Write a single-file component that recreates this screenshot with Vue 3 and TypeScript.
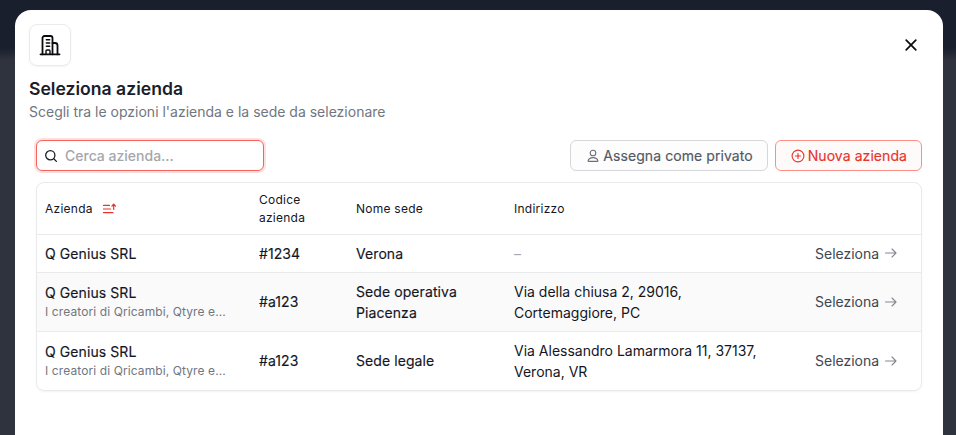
<script setup lang="ts">
interface Row { name: string; desc?: string; code: string; site: string; addr: string; muted?: boolean }
const rows: Row[] = [
  { name: 'Q Genius SRL', code: '#1234', site: 'Verona', addr: '–', muted: true },
  { name: 'Q Genius SRL', desc: 'I creatori di Qricambi, Qtyre e...', code: '#a123', site: 'Sede operativa Piacenza', addr: 'Via della chiusa 2, 29016, Cortemaggiore, PC' },
  { name: 'Q Genius SRL', desc: 'I creatori di Qricambi, Qtyre e...', code: '#a123', site: 'Sede legale', addr: 'Via Alessandro Lamarmora 11, 37137, Verona, VR' },
]
</script>

<template>
  <div class="backdrop">
    <section class="modal">
      <header class="head">
        <div class="logo">
          <svg width="24" height="24" viewBox="0 0 24 24" fill="none" stroke="#0b0b0f" stroke-width="1.800" stroke-linecap="round" stroke-linejoin="round">
            <path d="M2.500 21.300h19" />
            <path d="M4.500 21.300V5a2 2 0 0 1 2-2h6a2 2 0 0 1 2 2v16.300" />
            <path d="M14.500 10h2.500a2.500 2.500 0 0 1 2.500 2.500v8.800" />
            <path d="M8 21.300v-3.300a1 1 0 0 1 1-1h2a1 1 0 0 1 1 1v3.300" stroke-width="1.400" />
            <path d="M8.300 10h3.400M8.300 13.300h3.400M8.300 6.800h3.400" stroke-width="1.400" />
          </svg>
        </div>
        <button class="close" aria-label="Chiudi">
          <svg width="12" height="12" viewBox="0 0 12 12" fill="none" stroke="#0b0b0f" stroke-width="1.700" stroke-linecap="round"><path d="M1.200 1.200l9.600 9.600M10.800 1.200l-9.600 9.600" /></svg>
        </button>
      </header>
      <h1 class="title">Seleziona azienda</h1>
      <p class="sub">Scegli tra le opzioni l'azienda e la sede da selezionare</p>

      <div class="tools">
        <label class="search">
          <svg width="14" height="14" viewBox="0 0 14 14" fill="none" stroke="#1a1d26" stroke-width="1.300" stroke-linecap="round"><circle cx="6.300" cy="6.300" r="4.600" /><path d="M9.800 9.800l2.600 2.600" /></svg>
          <input class="input" placeholder="Cerca azienda..." />
        </label>
        <div class="actions">
          <button class="btn plain">
            <svg width="14" height="14" viewBox="0 0 14 14" fill="none" stroke="#6c7079" stroke-width="1.100" stroke-linecap="round" stroke-linejoin="round"><circle cx="7" cy="4" r="2.800" /><path d="M2.500 12.400h9c.3 0 .5-.3.4-.6-.5-2-2.200-3.200-4.900-3.200s-4.400 1.200-4.900 3.200c-.1.300.1.600.4.600z" /></svg>
            Assegna come privato
          </button>
          <button class="btn danger">
            <svg width="14" height="14" viewBox="0 0 14 14" fill="none" stroke="#e5352d" stroke-width="1.100" stroke-linecap="round"><circle cx="7" cy="7" r="5.900" /><path d="M7 4.600v4.800M4.600 7h4.800" /></svg>
            Nuova azienda
          </button>
        </div>
      </div>

      <div class="card">
        <table class="table">
          <colgroup>
            <col class="c1" /><col class="c2" /><col class="c3" /><col class="c4" /><col />
          </colgroup>
          <thead>
            <tr>
              <th>
                <span class="sort">Azienda
                  <svg width="14" height="12" viewBox="0 0 14 12" fill="none" stroke="#e5352d" stroke-width="1.200" stroke-linecap="round" stroke-linejoin="round"><path d="M.5 2.400h6M.5 6h7M.5 9.700h9.500" /><path d="M10.700 6.500V1.200M9 3l1.700-1.800L12.400 3" /></svg>
                </span>
              </th>
              <th>Codice azienda</th>
              <th>Nome sede</th>
              <th>Indirizzo</th>
              <th></th>
            </tr>
          </thead>
          <tbody>
            <tr v-for="(r, i) in rows" :key="i" :class="{ alt: i === 1 }">
              <td>
                <div class="name">{{ r.name }}</div>
                <div v-if="r.desc" class="desc">{{ r.desc }}</div>
              </td>
              <td class="strong">{{ r.code }}</td>
              <td class="strong">{{ r.site }}</td>
              <td class="addr" :class="{ muted: r.muted }">{{ r.addr }}</td>
              <td class="pick">
                <span class="pick-in">Seleziona
                  <svg width="14" height="12" viewBox="0 0 14 12" fill="none" stroke="#85888f" stroke-width="1.100" stroke-linecap="round" stroke-linejoin="round"><path d="M1.500 6h10.500M8 2l4 4-4 4" /></svg>
                </span>
              </td>
            </tr>
          </tbody>
        </table>
      </div>
    </section>
  </div>
</template>

<style>
html, body { margin: 0; padding: 0; background: #2f333d; overflow: hidden; }
</style>

<style scoped>
* { box-sizing: border-box; }
.backdrop {
  height: 435px;
  padding: 10px 13px 0 15px;
  overflow: hidden;
  background: linear-gradient(#1a1f2e 0, #1a1f2e 48px, #2f333d 60px, #2f333d 100%);
  font-family: Inter, "Liberation Sans", sans-serif;
  color: #14161f;
}
.modal {
  height: 460px;
  background: #fff;
  border-radius: 16px;
  padding: 14px 21px 0 14px;
}
.head { display: flex; justify-content: space-between; align-items: center; }
.logo {
  width: 42px; height: 42px;
  display: flex; align-items: center; justify-content: center;
  border: 1px solid #e9eaeb; border-radius: 8px;
  box-shadow: 0 1px 2px rgba(16, 24, 40, .05);
}
.close {
  width: 24px; height: 24px; margin-right: -1px; padding: 0;
  display: flex; align-items: center; justify-content: center;
  background: none; border: 0;
}
.title { margin: 12px 0 0; font-size: 17.6px; line-height: 22px; font-weight: 600; color: #1a1d2a; }
.sub { margin: 2px 0 0; font-size: 14px; line-height: 20px; color: #717680; }
.tools {
  margin: 18px 0 0 7px;
  display: flex; justify-content: space-between; align-items: center;
}
.search {
  width: 228px; height: 31px;
  display: flex; align-items: center; gap: 7px;
  padding: 0 7px;
  background: #fff;
  border: 1px solid #f4645c; border-radius: 6px;
  box-shadow: 0 0 0 2px #fee0de;
}
.input {
  flex: 1; min-width: 0; border: 0; outline: 0; padding: 0;
  font: 500 14px Inter, "Liberation Sans", sans-serif; color: #14161f;
  background: transparent;
}
.input::placeholder { color: #a4a7ae; opacity: 1; }
.actions { display: flex; gap: 7px; }
.btn {
  height: 31px; padding: 0 14px 0 15px;
  display: flex; align-items: center; gap: 3px;
  font: 400 14px Inter, "Liberation Sans", sans-serif;
  letter-spacing: .07px;
  -webkit-text-stroke: .15px currentColor;
  border-radius: 6px; background: #fff;
}
.plain { border: 1px solid #d5d7da; color: #535862; background: #fdfdfd; }
.danger { border: 1px solid #fb8f86; color: #e5352d; background: #fffafa; }
.card {
  margin: 11px 0 0 7px;
  border: 1px solid #e9eaeb; border-radius: 8px;
  box-shadow: 0 1px 2px rgba(16, 24, 40, .05);
  overflow: hidden;
}
.table { width: 100%; border-collapse: collapse; table-layout: fixed; font-size: 14px; }
.c1 { width: 214px; }
.c2 { width: 97px; }
.c3 { width: 158px; }
.c4 { width: 301px; }
th {
  height: 51px; padding: 1px 8px 0;
  text-align: left; font-size: 12px; line-height: 18px; font-weight: 400; color: #14161f;
  letter-spacing: .25px;
}
.sort { display: flex; align-items: center; gap: 10px; }
td {
  padding: 8px;
  border-top: 1px solid #e9eaeb;
  line-height: 21px; vertical-align: middle;
}
tbody tr:first-child td { height: 38px; padding-top: 0; padding-bottom: 0; }
tr.alt td { background: #fafafa; }
.name, .strong { font-weight: 400; letter-spacing: .08px; -webkit-text-stroke: .15px currentColor; }
.name { color: #14161f; line-height: 20px; }
.name:only-child { line-height: 21px; }
.desc { font-size: 12px; line-height: 18px; color: #717680; white-space: nowrap; letter-spacing: .1px; font-weight: 400; }
.addr { font-weight: 400; padding-right: 40px; }
.muted { color: #a4a7ae; }
.pick-in { display: flex; align-items: center; gap: 5px; color: #414651; font-weight: 400; white-space: nowrap; }
</style>
